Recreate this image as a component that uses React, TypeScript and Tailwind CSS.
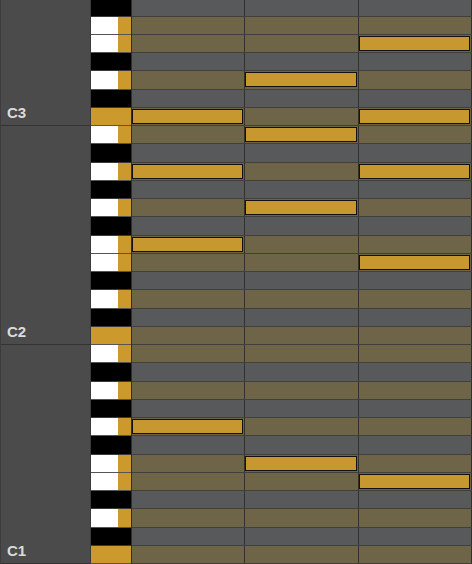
const BLACK = [1, 3, 6, 8, 10];

// semitone numbers, top row F#3 down to C1
const rows = Array.from({ length: 31 }, (_, i) => 42 - i);

const notes: Record<number, number[]> = {
  40: [2],
  38: [1],
  36: [0, 2],
  35: [1],
  33: [0, 2],
  31: [1],
  29: [0],
  28: [2],
  19: [0],
  17: [1],
  16: [2],
};

const sections = [
  { label: 'C3', rows: 7 },
  { label: 'C2', rows: 12 },
  { label: 'C1', rows: 12 },
];

function Key({ n }: { n: number }) {
  const pc = n % 12;
  if (pc === 0) {
    return <div className="h-[18.25px] bg-[#cc9a2c] border-b border-[#555]" />;
  }
  if (BLACK.includes(pc)) {
    return <div className="h-[18.25px] bg-black border-b border-[#3a3a3a]" />;
  }
  return (
    <div className="h-[18.25px] flex border-b border-[#555]">
      <div className="w-[27px] bg-white" />
      <div className="flex-1 bg-[#cc9a2c]" />
    </div>
  );
}

function GridRow({ n }: { n: number }) {
  const black = BLACK.includes(n % 12);
  const cols = notes[n] || [];
  return (
    <div
      className={`h-[18.25px] flex border-b border-[#413f39] ${
        black ? 'bg-[#58595b]' : 'bg-[#6e6448]'
      }`}
    >
      {[0, 1, 2].map(c => (
        <div key={c} className="flex-1 border-r border-[#33312c] pt-px">
          {cols.includes(c) && (
            <div className="h-[15px] mr-px bg-[#c6982f] border border-[#111]" />
          )}
        </div>
      ))}
    </div>
  );
}

export default function App() {
  return (
    <div className="w-[472px] h-[564px] overflow-hidden bg-[#4b4b4b] font-['Liberation_Sans',Arial,sans-serif]">
      <div className="flex -mt-[1.75px]">
        {/* Octave labels */}
        <div className="w-[91px] border-l border-[#3c3c3c] border-r border-r-[#3a3a3a]">
          {sections.map(s => (
            <div
              key={s.label}
              className="flex items-end border-b border-[#333] px-[6px] pb-[5px]"
              style={{ height: s.rows * 18.25 }}
            >
              <span className="text-[15px] font-bold leading-none text-[#dcdcdc]">{s.label}</span>
            </div>
          ))}
        </div>

        {/* Keyboard */}
        <div className="w-[41px] border-r border-[#2e2e2e]">
          {rows.map(n => (
            <Key key={n} n={n} />
          ))}
        </div>

        {/* Note grid */}
        <div className="flex-1">
          {rows.map(n => (
            <GridRow key={n} n={n} />
          ))}
        </div>
      </div>
    </div>
  );
}
